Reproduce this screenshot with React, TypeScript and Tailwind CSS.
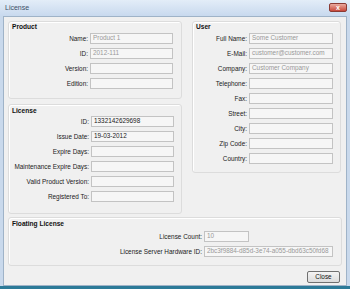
import React from 'react'

type RowProps = { label: string; value?: string; labelW: string; inputW: string; dim?: boolean }

function Row({ label, value, labelW, inputW, dim }: RowProps) {
  return (
    <div className="flex h-[11px] items-center">
      <div className={`${labelW} shrink-0 pr-[2px] text-right text-[#1a1a1a]`}>{label}</div>
      <div
        className={`${inputW} flex h-[11px] shrink-0 items-center border border-[#c3c3c3] bg-[#f6f6f6] px-[2px] leading-none ${
          dim ? 'text-[#999]' : 'text-[#1a1a1a]'
        }`}
      >
        {value}
      </div>
    </div>
  )
}

function Group({ title, className, children }: { title: string; className: string; children: React.ReactNode }) {
  return (
    <div className={`rounded-[3px] border border-[#dcdcdc] shadow-[inset_1px_1px_0_#ffffff] ${className}`}>
      <div className="pl-[3px] text-[6.6px] font-bold leading-[8px] text-[#111]">{title}</div>
      {children}
    </div>
  )
}

export default function App() {
  const product = [
    ['Name:', 'Product 1', true],
    ['ID:', '2012-111', true],
    ['Version:', '', false],
    ['Edition:', '', false],
  ] as const
  const license = [
    ['ID:', '1332142629698'],
    ['Issue Date:', '19-03-2012'],
    ['Expire Days:', ''],
    ['Maintenance Expire Days:', ''],
    ['Valid Product Version:', ''],
    ['Registered To:', ''],
  ] as const
  const user = [
    ['Full Name:', 'Some Customer'],
    ['E-Mail:', 'customer@customer.com'],
    ['Company:', 'Customer Company'],
    ['Telephone:', ''],
    ['Fax:', ''],
    ['Street:', ''],
    ['City:', ''],
    ['Zip Code:', ''],
    ['Country:', ''],
  ] as const

  return (
    <div
      className="flex h-[289px] w-[350px] flex-col overflow-hidden bg-[#c9d9ec] text-[6.4px]"
      style={{ fontFamily: '"Liberation Sans", Arial, sans-serif' }}
    >
      {/* title bar */}
      <div className="flex h-[16px] shrink-0 items-center justify-between bg-gradient-to-b from-[#e3edf8] to-[#c8d9ee] pl-[5px] pr-[3px]">
        <span className="text-[7px] text-[#3d5068]">License</span>
        <div className="mb-[2px] flex h-[9px] w-[18px] items-center justify-center rounded-[2px] border border-[#8b3a33] bg-gradient-to-b from-[#e9a99f] to-[#c7463a]">
          <span className="text-[7px] font-bold leading-none text-white">x</span>
        </div>
      </div>

      {/* body */}
      <div className="mx-[3px] flex flex-1 flex-col border border-[#9fb3c8] bg-[#f0f0f0] pl-[4px] pr-[5px] pt-[4px]">
        <div className="flex gap-[10px]">
          <div className="flex flex-col gap-[5px]">
            <Group title="Product" className="w-[174px] pb-[9px] pt-[1px]">
              <div className="mt-[2px] flex flex-col gap-[4px]">
                {product.map(([l, v, d]) => (
                  <Row key={l} label={l} value={v} dim={d} labelW="w-[81px]" inputW="w-[83px]" />
                ))}
              </div>
            </Group>
            <Group title="License" className="w-[174px] pb-[11px] pt-[2px]">
              <div className="mt-[1px] flex flex-col gap-[4px]">
                {license.map(([l, v]) => (
                  <Row key={l} label={l} value={v} labelW="w-[82px]" inputW="w-[83px]" />
                ))}
              </div>
            </Group>
          </div>
          <Group title="User" className="h-[152px] w-[149px] pt-[1px]">
            <div className="mt-[2px] flex flex-col gap-[4px]">
              {user.map(([l, v], i) => (
                <Row key={l} label={l} value={v} dim={i < 3} labelW="w-[56px]" inputW="w-[84px]" />
              ))}
            </div>
          </Group>
        </div>

        <Group title="Floating License" className="mt-[3px] w-[334px] pb-[8px] pt-[2px]">
          <div className="mt-[3px] flex flex-col gap-[4px]">
            <Row label="License Count:" value="10" dim labelW="w-[195px]" inputW="w-[45px]" />
            <Row label="License Server Hardware ID:" value="2bc3f9884-d85d-3e74-a055-dbd63c50fd68" dim labelW="w-[195px]" inputW="w-[129px]" />
          </div>
        </Group>

        <div className="mt-[5px] flex justify-end pr-[1px]">
          <button className="flex h-[12px] w-[33px] items-center justify-center rounded-[2px] border border-[#707070] bg-gradient-to-b from-[#f4f4f4] to-[#dcdcdc] text-[6.4px] leading-none text-[#111]">
            Close
          </button>
        </div>
      </div>
      <div className="h-[3px] shrink-0 bg-[#2c7a98]" />
    </div>
  )
}
